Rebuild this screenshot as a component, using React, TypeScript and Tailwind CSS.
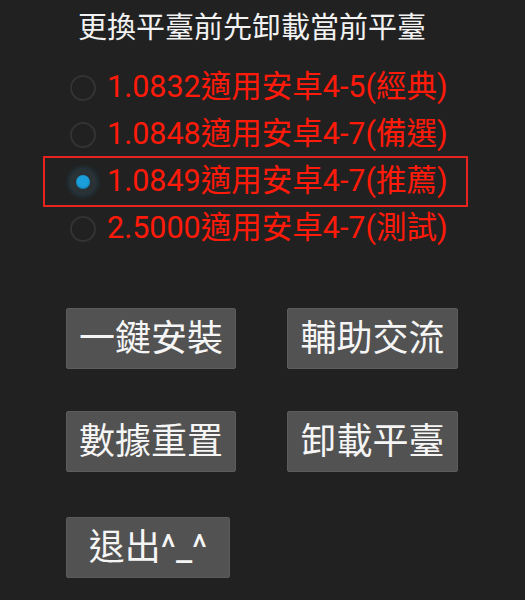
import { useState } from 'react'

const FONT = "font-['Roboto','Noto_Sans_CJK_TC',sans-serif]"

const options = [
	'1.0832適用安卓4-5(經典)',
	'1.0848適用安卓4-7(備選)',
	'1.0849適用安卓4-7(推薦)',
	'2.5000適用安卓4-7(測試)',
]

function Radio({ checked }: { checked: boolean }) {
	if (checked) {
		return (
			<span className="flex h-[26px] w-[26px] items-center justify-center rounded-full bg-[#2a3236] shadow-[0_0_4px_2px_rgba(40,120,160,0.25)]">
				<span className="h-[14px] w-[14px] rounded-full bg-[#1a9fdb] shadow-[inset_0_-1px_2px_rgba(0,0,0,0.25)]" />
			</span>
		)
	}
	return <span className="h-[26px] w-[26px] rounded-full border-2 border-[#333333]" />
}

function Btn({ label, w }: { label: string; w: string }) {
	return (
		<button
			className={`${w} flex h-[61px] items-center justify-center rounded-[2px] border border-[#5c5c5c] bg-[#525252] text-[36px] leading-none text-[#f5f5f5]`}
		>
			{label}
		</button>
	)
}

export default function App() {
	const [selected, setSelected] = useState(2)

	return (
		<div className={`${FONT} h-[600px] w-full overflow-hidden bg-[#212121]`}>
			{/* Header */}
			<div className="flex h-[56px] items-center pl-[78px] text-[29px] leading-none text-[#f2f2f2]">
				更換平臺前先卸載當前平臺
			</div>

			{/* Platform choices */}
			<div className="ml-[45px] mt-[8px] w-[421px]">
				{options.map((opt, i) => (
					<div
						key={opt}
						onClick={() => setSelected(i)}
						className={`flex h-[47px] cursor-pointer items-center pl-[25px] ${
							i === selected ? 'outline-2 outline-[#e8221f]' : ''
						}`}
					>
						<Radio checked={i === selected} />
						<span className="ml-[11px] text-[30.5px] leading-none text-[#ff1a0a]">
							{opt}
						</span>
					</div>
				))}
			</div>

			{/* Actions */}
			<div className="ml-[66px] mt-[56px] grid w-[392px] grid-cols-[170px_171px] gap-x-[51px] gap-y-[42px]">
				<Btn label="一鍵安裝" w="w-[170px]" />
				<Btn label="輔助交流" w="w-[171px]" />
				<Btn label="數據重置" w="w-[170px]" />
				<Btn label="卸載平臺" w="w-[171px]" />
			</div>
			<div className="ml-[66px] mt-[45px]">
				<Btn label="退出^_^" w="w-[164px]" />
			</div>
		</div>
	)
}
